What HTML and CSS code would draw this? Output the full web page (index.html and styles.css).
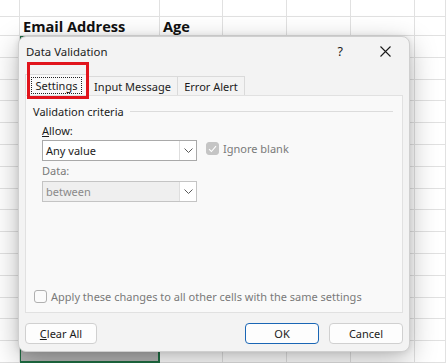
FILE: index.html
```html
<!DOCTYPE html>
<html>
<head>
<meta charset="utf-8">
<link rel="stylesheet" href="styles.css">
</head>
<body>
<div class="sheet">
  <div class="sel"></div>
  <div class="c"></div><div class="c"></div><div class="c"></div><div class="c"></div><div class="c"></div><div class="c"></div><div class="c"></div>
  <div class="c"></div><div class="c h">Email Address</div><div class="c h">Age</div><div class="c"></div><div class="c"></div><div class="c"></div><div class="c"></div>
  <div class="c"></div><div class="c"></div><div class="c"></div><div class="c"></div><div class="c"></div><div class="c"></div>
  <div class="c"></div><div class="c"></div><div class="c"></div><div class="c"></div><div class="c"></div><div class="c"></div>
  <div class="c"></div><div class="c"></div><div class="c"></div><div class="c"></div><div class="c"></div><div class="c"></div>
  <div class="c"></div><div class="c"></div><div class="c"></div><div class="c"></div><div class="c"></div><div class="c"></div>
  <div class="c"></div><div class="c"></div><div class="c"></div><div class="c"></div><div class="c"></div><div class="c"></div>
  <div class="c"></div><div class="c"></div><div class="c"></div><div class="c"></div><div class="c"></div><div class="c"></div>
  <div class="c"></div><div class="c"></div><div class="c"></div><div class="c"></div><div class="c"></div><div class="c"></div>
  <div class="c"></div><div class="c"></div><div class="c"></div><div class="c"></div><div class="c"></div><div class="c"></div>
  <div class="c"></div><div class="c"></div><div class="c"></div><div class="c"></div><div class="c"></div><div class="c"></div>
  <div class="c"></div><div class="c"></div><div class="c"></div><div class="c"></div><div class="c"></div><div class="c"></div>
  <div class="c"></div><div class="c"></div><div class="c"></div><div class="c"></div><div class="c"></div><div class="c"></div>
  <div class="c"></div><div class="c"></div><div class="c"></div><div class="c"></div><div class="c"></div><div class="c"></div>
  <div class="c"></div><div class="c"></div><div class="c"></div><div class="c"></div><div class="c"></div><div class="c"></div>
  <div class="c"></div><div class="c"></div><div class="c"></div><div class="c"></div><div class="c"></div><div class="c"></div>
  <div class="c"></div><div class="c"></div><div class="c"></div><div class="c"></div><div class="c"></div><div class="c"></div>
</div>

<div class="dialog">
  <div class="titlebar">
    <span class="title">Data Validation</span>
    <span class="help">?</span>
    <span class="close"><svg width="11" height="11" viewBox="0 0 11 11"><path d="M0.5 0.5 L10.5 10.5 M10.5 0.5 L0.5 10.5" stroke="#1b1b1b" stroke-width="1.1" fill="none"/></svg></span>
  </div>
  <div class="tabs">
    <div class="tab active"><span class="focus">Settings</span></div>
    <div class="tab">Input Message</div>
    <div class="tab">Error Alert</div>
  </div>
  <div class="redbox"></div>
  <div class="panel">
    <div class="group"><span>Validation criteria</span><span class="rule"></span></div>
    <div class="fields">
      <div class="label"><u>A</u>llow:</div>
      <div class="line">
        <div class="combo"><span class="val">Any value</span><span class="drop"><svg width="9" height="5" viewBox="0 0 9 5"><path d="M0.5 0.5 L4.5 4.5 L8.5 0.5" stroke="#5a5a5a" stroke-width="1" fill="none"/></svg></span></div>
        <div class="check dim"><span class="box on"><svg width="9" height="8" viewBox="0 0 9 8"><path d="M1 4.2 L3.4 6.5 L8 1.2" stroke="#ffffff" stroke-width="1.1" fill="none"/></svg></span>Ignore blank</div>
      </div>
      <div class="label dim">Data:</div>
      <div class="combo disabled"><span class="val">between</span><span class="drop"><svg width="9" height="5" viewBox="0 0 9 5"><path d="M0.5 0.5 L4.5 4.5 L8.5 0.5" stroke="#5a5a5a" stroke-width="1" fill="none"/></svg></span></div>
    </div>
    <div class="check apply dim"><span class="box"></span>Apply these changes to all other cells with the same settings</div>
  </div>
  <div class="buttons">
    <div class="btn"><u>C</u>lear All</div>
    <div class="grow"></div>
    <div class="btn ok">OK</div>
    <div class="btn">Cancel</div>
  </div>
</div>
</body>
</html>
```

FILE: styles.css
```css
* { box-sizing: border-box; }
html, body { margin: 0; padding: 0; }
body {
  width: 446px;
  height: 363px;
  overflow: hidden;
  position: relative;
  background: #ffffff;
  font-family: "Noto Sans", "Open Sans", sans-serif;
}

.sheet {
  display: grid;
  grid-template-columns: 20px 140px 63px 64px 64px 64px 31px;
  grid-template-rows: 17px 19px repeat(15, 21.8px);
}
.c {
  border-right: 1px solid #e1e1e1;
  border-bottom: 1px solid #e1e1e1;
}
.c.h {
  font-family: "Open Sans", "Noto Sans", sans-serif;
  font-weight: 700;
  font-size: 14.6px;
  line-height: 19px;
  color: #111;
  padding-left: 3px;
  white-space: nowrap;
  overflow: visible;
}
.sel {
  grid-column: 2;
  grid-row: 3 / span 15;
  margin-left: -1px;
  margin-top: -1px;
  border: 2px solid #1f6e43;
  background: #b4b4b4;
}

.dialog {
  position: absolute;
  left: 18px;
  top: 36px;
  width: 392px;
  height: 316px;
  background: #f3f3f3;
  border: 1px solid #cfcfcf;
  border-radius: 8px;
  box-shadow: 0 8px 28px rgba(0,0,0,0.28), 0 0 6px rgba(0,0,0,0.10);
  display: flex;
  flex-direction: column;
  padding: 0 6px 7px 6px;
  font-size: 11px;
  color: #1b1b1b;
}

.titlebar {
  height: 29px;
  display: flex;
  align-items: center;
  padding-left: 1px;
}
.title { font-size: 11.4px; }
.help { margin-left: auto; font-size: 12.5px; margin-right: 37px; }
.close { width: 11px; height: 11px; display: flex; margin-right: 12px; }

.tabs {
  display: flex;
  margin-top: 10px;
  height: 19px;
  position: relative;
  z-index: 1;
}
.tab {
  border: 1px solid #dadada;
  border-bottom: none;
  border-left: none;
  display: flex;
  align-items: center;
  justify-content: center;
  white-space: nowrap;
  background: #f3f3f3;
}
.tab:nth-child(2) { width: 90px; }
.tab:nth-child(3) { width: 67px; }
.tab.active {
  width: 63px;
  height: 21px;
  margin-top: -2px;
  border-left: 1px solid #dadada;
  background: #f9f9f9;
  margin-bottom: -1px;
}
.focus {
  outline: 1px dotted #222;
  outline-offset: 0;
  padding: 0 4px;
  line-height: 15px;
}

.redbox {
  position: absolute;
  left: 8px;
  top: 25px;
  width: 62px;
  height: 37px;
  border: 3px solid #e1141c;
  z-index: 2;
}

.panel {
  height: 218px;
  background: #f9f9f9;
  border: 1px solid #e1e1e1;
  display: flex;
  flex-direction: column;
  padding: 7px 9px 8px 7px;
}
.group {
  display: flex;
  align-items: center;
  height: 16px;
}
.rule {
  flex: 1;
  height: 1px;
  background: #dcdcdc;
  margin-left: 6px;
}
.fields {
  margin-left: 9px;
  margin-top: 4px;
  display: flex;
  flex-direction: column;
}
.label { height: 16px; line-height: 16px; }
.label + .line, .label + .combo { margin-top: 1px; }
.line + .label { margin-top: 2px; }
.dim { color: #7a7a7a; }
.line { display: flex; align-items: flex-start; }
.combo {
  width: 155px;
  height: 21px;
  border: 1px solid #a9a9a9;
  background: #ffffff;
  display: flex;
  align-items: center;
}
.combo .val { flex: 1; padding-left: 3px; }
.combo .drop {
  width: 17px;
  height: 19px;
  border-left: 1px solid #dedede;
  display: flex;
  align-items: center;
  justify-content: center;
  background: #ffffff;
}
.combo.disabled {
  background: #efefef;
  border-color: #c4c4c4;
  color: #8a8a8a;
  margin-top: 2px;
}

.check {
  display: flex;
  align-items: center;
  white-space: nowrap;
}
.line .check { margin-left: 9px; margin-top: 1px; }
.box {
  width: 13px;
  height: 13px;
  border: 1px solid #b0b0b0;
  border-radius: 3px;
  margin-right: 4px;
  display: flex;
  align-items: center;
  justify-content: center;
  background: #fbfbfb;
}
.box.on { background: #c5c5c5; border-color: #c5c5c5; }
.apply { margin-top: auto; height: 16px; padding-left: 1px; }

.buttons {
  display: flex;
  margin-top: 10px;
  gap: 10px;
}
.grow { flex: 1; }
.btn {
  height: 21px;
  width: 74px;
  border: 1px solid #d0d0d0;
  border-radius: 4px;
  background: #fdfdfd;
  display: flex;
  align-items: center;
  justify-content: center;
}
.btn:first-child { width: 72px; }
.btn.ok { border: 1.5px solid #1a66b5; }
```
